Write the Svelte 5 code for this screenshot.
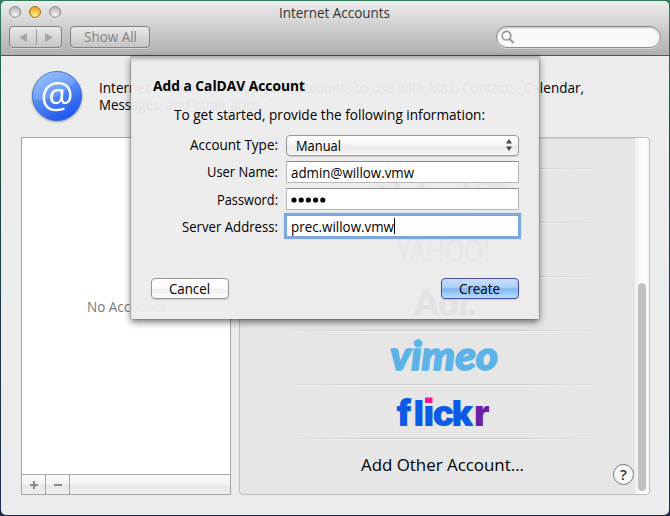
<script>
  const intro = [
    { text: 'Internet Accounts sets up your accounts to use with Mail, Contacts, Calendar,', width: 485 },
    { text: 'Messages, and other apps.', width: 165 }
  ];
  const fields = [
    { label: 'User Name:', labelWidth: 71, value: 'admin@willow.vmw', width: 123, shift: 3 },
    { label: 'Password:', labelWidth: 61, value: '•••••', width: 34, shift: 0 },
    { label: 'Server Address:', labelWidth: 96, value: 'prec.willow.vmw', width: 103, shift: 0, focus: true }
  ];
</script>

{#snippet line(text, width, cls = '')}
  <svg class="line {cls}" {width} height="20"><text x="0" y="15.500" textLength={width} lengthAdjust="spacingAndGlyphs">{text}</text></svg>
{/snippet}

<div class="desktop">
  <div class="window">
    <header>
      <div class="titlebar">
        <div class="lights"><i></i><i class="amber"></i><i></i></div>
        {@render line('Internet Accounts', 111, 'title')}
      </div>
      <div class="toolbar">
        <div class="tb nav">
          <svg width="52" height="20"><path d="M17 6v9L9 10.500zM35 6v9l8-4.500z" fill="#a5a5a5" /><path d="M26.500 2v16" stroke="#9b9b9b" /></svg>
        </div>
        <div class="tb all">{@render line('Show All', 53)}</div>
        <div class="search">
          <svg width="20" height="19"><circle cx="9.500" cy="8.700" r="4.300" fill="none" stroke="#999" stroke-width="1.700" /><path d="M12.600 12l4 4" stroke="#999" stroke-width="2.200" /></svg>
        </div>
      </div>
    </header>

    <section class="intro">
      <svg class="at" width="54" height="56">
        <defs>
          <linearGradient id="blue" x1="0.2" y1="0" x2="0.7" y2="1">
            <stop offset="0" stop-color="#86b9fb" /><stop offset=".5" stop-color="#4f88f5" /><stop offset="1" stop-color="#1d50ee" />
          </linearGradient>
        </defs>
        <circle cx="27" cy="26" r="24.500" fill="url(#blue)" stroke="#3b6fd0" />
        <path d="M3 29Q25 34 46 11A24 24 0 0 0 3 29z" fill="#fff" opacity=".14" />
        <text x="27" y="37.500" text-anchor="middle">@</text>
      </svg>
      <div class="copy">
        {#each intro as row}{@render line(row.text, row.width)}{/each}
      </div>
    </section>

    <main>
      <div class="accounts">
        <div class="empty">{@render line('No Accounts', 79)}</div>
        <footer>
          <span><svg width="8" height="8"><path d="M4 0v8M0 4h8" stroke="#8a8a8a" stroke-width="2" /></svg></span>
          <span><svg width="8" height="8"><path d="M0 4h8" stroke="#8a8a8a" stroke-width="2" /></svg></span>
        </footer>
      </div>
      <div class="services">
        <div class="rows">
          <div class="row first"></div>
          <div class="row"><svg width="160" height="52"><rect x="111" y="13" width="34" height="29" fill="#1686b0" /><text x="14" y="40" textLength="94" font-size="34" font-weight="700">Linked</text><text x="115" y="39" font-size="30" font-weight="700" fill="#fff">in</text></svg></div>
          <div class="row"><svg width="160" height="52"><text class="yahoo" x="33" y="38" textLength="94" lengthAdjust="spacingAndGlyphs">YAHOO!</text></svg></div>
          <div class="row"><svg width="160" height="52"><text class="aol" x="51" y="38" textLength="62" lengthAdjust="spacingAndGlyphs">Aol.</text></svg></div>
          <div class="row"><svg width="160" height="52"><text class="vimeo" x="27" y="38.500" textLength="108" lengthAdjust="spacingAndGlyphs">vimeo</text></svg></div>
          <div class="row"><svg width="160" height="52"><text class="flickr" x="33.500 50.500 60.500 69.500 88.500 111" y="40.500">flıck<tspan fill="#6c20a8">r</tspan></text><rect x="62" y="12.500" width="7.500" height="5.500" fill="#ff1493" /></svg></div>
          <div class="row">{@render line('Add Other Account...', 163, 'other')}</div>
        </div>
        <div class="track"><div class="thumb"></div></div>
        <div class="help">?</div>
      </div>
    </main>

    <div class="sheet">
      <div class="heading">{@render line('Add a CalDAV Account', 152, 'bold')}</div>
      <div class="sub">{@render line('To get started, provide the following information:', 311)}</div>
      <div class="form">
        <div class="label" style="padding-bottom: 3px">{@render line('Account Type:', 88)}</div>
        <div class="select">{@render line('Manual', 45)}
          <svg width="6" height="12"><path d="M3 0l3 4.500H0zM3 12l3-4.500H0z" fill="#444" /></svg>
        </div>
        {#each fields as f}
          <div class="label" style="padding-bottom: {f.shift}px">{@render line(f.label, f.labelWidth)}</div>
          <div class="input" class:focus={f.focus}>
            {#if f.value[0] === '•'}
              <svg width="36" height="20">{#each [0, 1, 2, 3, 4] as n}<circle cx={3 + n * 7.2} cy="11" r="2.600" />{/each}</svg>
            {:else}
              {@render line(f.value, f.width)}
            {/if}
            {#if f.focus}<b class="caret"></b>{/if}
          </div>
        {/each}
      </div>
      <div class="buttons">
        <div class="button">{@render line('Cancel', 41)}</div>
        <div class="button primary">{@render line('Create', 41)}</div>
      </div>
    </div>
  </div>
</div>

<style>
  :global(body) { margin: 0; }
  * { box-sizing: border-box; }
  svg { display: block; flex: none; }
  .desktop { width: 670px; height: 516px; padding: 1px; background: linear-gradient(#2f7d5a, #18513d 25%, #183b45 50%, #1d2b4b); font-family: "Open Sans", "Noto Sans", sans-serif; font-size: 13.7px; }
  .window { position: relative; width: 668px; height: 514px; border-radius: 5px; background: #ececec; overflow: hidden; display: flex; flex-direction: column; }
  .line { overflow: visible; fill: #000; }
  header { height: 55px; flex: none; background: linear-gradient(#ebebeb, #d0d0d0 45%, #b0b0b0); border-bottom: 1px solid #555; border-top: 1px solid #f4f4f4; }
  .titlebar { height: 23px; display: flex; align-items: center; padding-bottom: 3px; }
  .lights { display: flex; gap: 8px; padding-left: 8px; width: 278px; }
  .lights i { width: 12px; height: 12px; border-radius: 50%; border: 1px solid #888; background: radial-gradient(circle at 50% 80%, #f4f4f4, #bdbdbd 75%); box-shadow: 0 1px #eee; }
  .lights .amber { border-color: #a36a12; background: radial-gradient(circle at 50% 85%, #fff08a, #edaa2d 75%); }
  .title { fill: #333; }
  .toolbar { display: flex; padding: 0 8px; align-items: center; height: 23px; }
  .tb { height: 22px; border: 1px solid #818181; border-radius: 4px; background: linear-gradient(#eaeaea, #c5c5c5); box-shadow: 0 1px #d5d5d5; display: flex; justify-content: center; align-items: center; }
  .nav { width: 53px; margin-right: 8px; }
  .all { width: 80px; padding-bottom: 1px; }
  .all .line { fill: #828282; }
  .search { margin-left: auto; width: 165px; height: 22px; border: 1px solid #8b8b8b; border-radius: 11px; background: #f9f9f9; box-shadow: inset 0 1px 2px #bbb, 0 1px #d5d5d5; }
  .intro { height: 81px; flex: none; display: flex; padding: 14px 0 0 29px; }
  .at { filter: drop-shadow(0 1px 1px #999); overflow: visible; }
  .at text { fill: #fff; font: 500 37px "Open Sans", sans-serif; }
  .copy { display: flex; flex-direction: column; padding: 7px 0 0 15px; }
  .copy .line { height: 17px; }
  main { display: flex; gap: 8px; padding-left: 20px; }
  .accounts { width: 210px; height: 358px; border: 1px solid #a5a5a5; background: #fff; display: flex; flex-direction: column; }
  .empty { flex: 1; display: flex; justify-content: center; align-items: center; }
  .empty .line { fill: #777; }
  footer { height: 20px; border-top: 1px solid #aaa; background: linear-gradient(#fbfbfb, #f2f2f2 50%, #e7e7e7 51%, #ededed); display: flex; }
  footer span { width: 24px; border-right: 1px solid #a5a5a5; display: flex; justify-content: center; align-items: center; }
  .services { position: relative; width: 411px; height: 358px; border: 1px solid #bdbdbd; border-radius: 4px; background: #e6e6e6; box-shadow: inset 0 1px 1px #d0d0d0; display: flex; overflow: hidden; }
  .rows { flex: 1; padding-left: 10px; }
  .row { height: 54px; display: flex; align-items: center; justify-content: center; background: linear-gradient(90deg, transparent 8%, #cbcbcb 30%, #cbcbcb 70%, transparent 92%) 0 0 / 100% 1px no-repeat, linear-gradient(90deg, transparent 8%, #f4f4f4 30%, #f4f4f4 70%, transparent 92%) 0 1px / 100% 1px no-repeat; }
  .row.first { height: 30px; background: none; }
  .row text { font-family: "Open Sans", sans-serif; }
  .row .yahoo { font: 29px Lato, sans-serif; fill: #7940c0; stroke: #7940c0; stroke-width: .5; }
  .row .aol { font: 900 34px Lato, sans-serif; stroke: #000; stroke-width: 1; }
  .row .vimeo { font: italic 900 40px Lato, sans-serif; fill: #5cb3e8; stroke: #5cb3e8; stroke-width: 1.6; stroke-linejoin: round; }
  .row .flickr { font: 900 36px Inter, sans-serif; fill: #0b5be5; }
  .row .other { font-size: 17px; }
  .track { width: 14px; background: linear-gradient(90deg, #efefef, #fff 60%, #f5f5f5); }
  .thumb { width: 8px; height: 208px; margin: 145px 0 0 3px; border-radius: 4px; background: #c1c1c1; }
  .help { position: absolute; right: 15px; bottom: 9px; width: 21px; height: 21px; border: 1px solid #777; border-radius: 50%; background: #f8f8f8; text-align: center; font: 600 15px/19px "Open Sans", sans-serif; color: #333; }
  .sheet { position: absolute; left: 130px; top: 55px; width: 408px; height: 263px; background: rgba(236, 236, 236, .955); box-shadow: 0 3px 7px rgba(0,0,0,.55), 0 0 1px rgba(0,0,0,.7), inset 0 5px 5px -3px rgba(0,0,0,.35); }
  .heading { padding: 19px 0 0 22px; height: 48px; }
  .sub { padding-left: 43px; height: 31px; }
  .bold { font-weight: 700; }
  .form { display: grid; grid-template-columns: 147px 233px; grid-template-rows: 21px 22px 22px 22px; row-gap: 5px; column-gap: 8px; }
  .label { display: flex; justify-content: flex-end; align-items: center; }
  .select, .input { display: flex; align-items: center; border: 1px solid #999; background: #fff; padding-left: 4px; }
  .select { border-radius: 4px; background: linear-gradient(#fff, #f4f4f4 50%, #e9e9e9 51%, #f6f6f6); padding: 0 6px 1px 9px; justify-content: space-between; box-shadow: 0 1px 1px #ccc; }
  .input { border-color: #8d8d8d #b6b6b6 #b6b6b6; }
  .focus { border-color: #79a5dc; box-shadow: 0 0 0 1px #7eaadf, 0 0 1px 2px #7eaadf; }
  .caret { width: 1px; height: 16px; background: #000; }
  .buttons { display: flex; justify-content: space-between; padding: 41px 20px 0; }
  .button { width: 78px; height: 21px; border: 1px solid #949494; border-radius: 4px; background: linear-gradient(#fff, #fbfbfb 50%, #eee 51%, #fff); display: flex; align-items: center; justify-content: center; padding: 0 1px 1px 0; box-shadow: 0 1px 1px #ccc; }
  .primary { border-color: #4b4ba8; background: linear-gradient(#cbdff9, #a5cbf7 49%, #7cb5f4 51%, #b8e0ff); }
</style>
